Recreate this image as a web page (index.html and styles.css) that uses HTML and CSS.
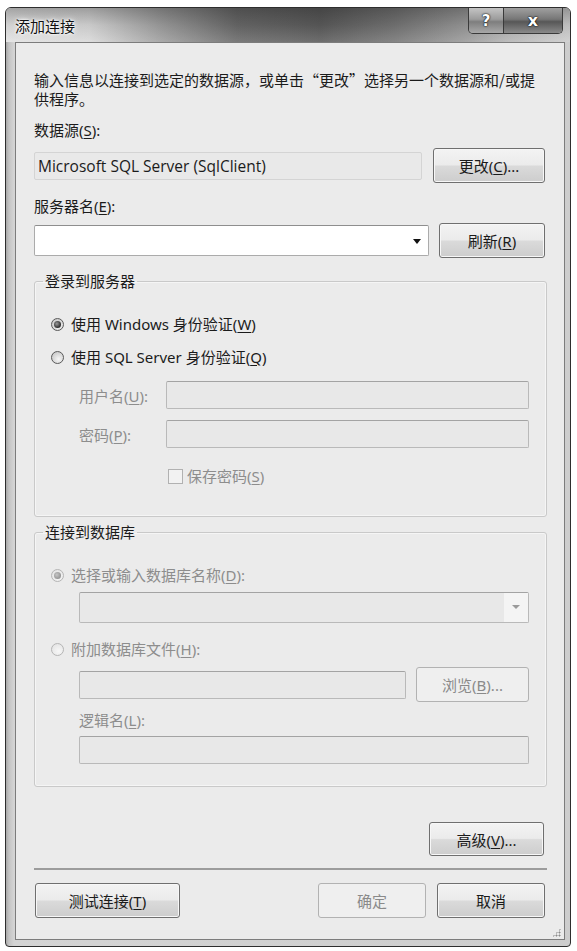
FILE: index.html
```html
<!DOCTYPE html>
<html lang="zh-CN">
  <head>
    <meta charset="UTF-8" />
    <meta name="viewport" content="width=device-width, initial-scale=1" />
    <title>添加连接</title>
    <link rel="stylesheet" href="styles.css">
  </head>
  <body>
    <div class="window">
      <div class="head">
        <span class="head-text">添加连接</span>
        <span class="head-right">
          <span class="caption-btns">
            <span class="cap help">?</span>
            <span class="cap close">x</span>
          </span>
        </span>
      </div>

      <div class="client">
        <p class="intro">输入信息以连接到选定的数据源，或单击“更改”选择另一个数据源和/或提<br>供程序。</p>

        <div class="label first">数据源(<u>S</u>):</div>
        <div class="row row-source">
          <div class="field readonly">Microsoft SQL Server (SqlClient)</div>
          <button class="btn btn-change">更改(<u>C</u>)...</button>
        </div>

        <div class="label second">服务器名(<u>E</u>):</div>
        <div class="row row-server">
          <div class="field combo"><span class="arrow"></span></div>
          <button class="btn btn-refresh">刷新(<u>R</u>)</button>
        </div>

        <!-- login group -->
        <fieldset class="group group-login">
          <legend>登录到服务器</legend>
          <label class="option">
            <span class="radio checked"></span>使用 Windows 身份验证(<u>W</u>)
          </label>
          <label class="option sql">
            <span class="radio"></span>使用 SQL Server 身份验证(<u>Q</u>)
          </label>
          <div class="cred-row user">
            <span class="cred-label">用户名(<u>U</u>):</span>
            <div class="field disabled"></div>
          </div>
          <div class="cred-row pass">
            <span class="cred-label">密码(<u>P</u>):</span>
            <div class="field disabled"></div>
          </div>
          <label class="option save">
            <span class="check"></span>保存密码(<u>S</u>)
          </label>
        </fieldset>

        <!-- database group -->
        <fieldset class="group group-db">
          <legend>连接到数据库</legend>
          <label class="option off">
            <span class="radio checked off"></span>选择或输入数据库名称(<u>D</u>):
          </label>
          <div class="field combo disabled db-combo"><span class="drop"><span class="arrow"></span></span></div>
          <label class="option off attach">
            <span class="radio off"></span>附加数据库文件(<u>H</u>):
          </label>
          <div class="row row-file">
            <div class="field disabled"></div>
            <button class="btn btn-browse" disabled>浏览(<u>B</u>)...</button>
          </div>
          <div class="sub-label">逻辑名(<u>L</u>):</div>
          <div class="field disabled logical"></div>
        </fieldset>

        <div class="advanced-row">
          <button class="btn btn-advanced">高级(<u>V</u>)...</button>
        </div>

        <hr class="separator">

        <div class="footer">
          <button class="btn btn-test">测试连接(<u>T</u>)</button>
          <button class="btn btn-ok" disabled>确定</button>
          <button class="btn btn-cancel">取消</button>
        </div>

        <span class="grip"></span>
      </div>
    </div>
  </body>
</html>
```

FILE: styles.css
```css
html,
body {
  margin: 0;
  padding: 0;
  background: #fff;
  font-family: "Noto Sans", "Noto Sans CJK SC", sans-serif;
  font-size: 15px;
  color: #1b1b1b;
}

.window {
  margin: 7px 5px 0 5px;
  width: 566px;
  height: 940px;
  border: 1px solid #2e2e2e;
  border-radius: 6px 6px 4px 4px;
  background: linear-gradient(90deg, #a9a9a9 0, #c4c4c4 3px, #d4d4d4 8px, #cdcdcd 100%);
  padding: 0 5px 9px 9px;
  box-sizing: border-box;
}

/* caption: the two halves carry the glass gradient */
.head {
  height: 34px;
  margin: 0 -5px 0 -9px;
  display: flex;
  border-radius: 5px 5px 0 0;
  overflow: hidden;
}

.head-text {
  flex: 1;
  padding: 8px 0 0 9px;
  font-family: "Noto Sans CJK SC", sans-serif;
  line-height: 19px;
  color: #111;
  text-shadow: 0 0 6px #fff, 0 0 3px #fff, 0 0 2px #fff;
  background:
    linear-gradient(180deg, rgba(20, 20, 20, 0.3) 0, rgba(20, 20, 20, 0.08) 50%, rgba(255, 255, 255, 0.12) 100%),
    linear-gradient(90deg, #e2e2e2 0, #d8d8d8 18%, #9c9c9c 34%, #686868 50%, #5a5a5a 68%, #747474 84%, #9a9a9a 100%);
}

.head-right {
  display: flex;
  padding-right: 7px;
  background:
    linear-gradient(180deg, rgba(20, 20, 20, 0.3) 0, rgba(20, 20, 20, 0.08) 50%, rgba(255, 255, 255, 0.12) 100%),
    linear-gradient(90deg, #9a9a9a 0, #b4b4b4 40%, #cccccc 100%);
}

.caption-btns {
  display: flex;
  height: 25px;
  border: 1px solid #3a3a3a;
  border-top: 0;
  border-radius: 0 0 5px 5px;
  overflow: hidden;
}

.cap {
  display: flex;
  align-items: center;
  justify-content: center;
  color: #fff;
  font-family: "DejaVu Sans", sans-serif;
  font-weight: bold;
  text-shadow: 0 0 2px #000, 0 0 1px #000;
  font-size: 15px;
}

.help {
  width: 34px;
  border-right: 1px solid #3a3a3a;
  background: linear-gradient(180deg, #c4c4c4 0, #9c9c9c 45%, #7e7e7e 55%, #a8a8a8 100%);
}

.close {
  width: 58px;
  font-size: 16px;
  background: linear-gradient(180deg, #a0a0a0 0, #767676 45%, #575757 55%, #8a8a8a 100%);
}

/* client area */
.client {
  position: relative;
  height: 898px;
  border: 1px solid #7c7c7c;
  background: #ebebeb;
  padding: 27px 17px 0 18px;
  box-sizing: border-box;
}

.intro {
  margin: 0;
  line-height: 19px;
  font-family: "Noto Sans CJK SC", sans-serif;
}

.label,
.sub-label {
  line-height: 19px;
}

.label.first {
  margin-top: 13px;
}

.label.second {
  margin-top: 14px;
}

u {
  text-decoration: underline;
  text-underline-offset: 2px;
}

.row {
  display: flex;
  align-items: center;
  margin-right: 2px;
}

.row-source {
  margin-top: 8px;
  gap: 11px;
}

.row-server {
  margin-top: 7px;
  gap: 10px;
}

.field {
  height: 28px;
  box-sizing: border-box;
  border: 1px solid #ababab;
  border-top-color: #8e8e8e;
  border-radius: 2px;
  background: #fff;
  flex: 1;
  position: relative;
}

.field.readonly {
  border-color: #d4d4d4;
  background: #e9e9e9;
  line-height: 26px;
  padding-left: 3px;
  font-family: "Open Sans", "Noto Sans CJK SC", sans-serif;
  font-size: 15.5px;
}

.field.combo {
  height: 31px;
}

.arrow {
  position: absolute;
  right: 7px;
  top: 13px;
  border-left: 4px solid transparent;
  border-right: 4px solid transparent;
  border-top: 5px solid #111;
}

.field.disabled {
  background: #e8e8e8;
  border-color: #b9b9b9;
  border-top-color: #a3a3a3;
}

/* buttons */
.btn {
  font: inherit;
  color: #1b1b1b;
  height: 35px;
  border: 1px solid #6f6f6f;
  border-radius: 3px;
  padding: 0;
  background: linear-gradient(180deg, #f3f3f3 0, #ebebeb 48%, #dadada 52%, #cdcdcd 100%);
  box-shadow: inset 0 0 0 1px #f7f7f7;
}

.btn:disabled {
  color: #8a8a8a;
  border-color: #b2b2b2;
  background: #efefef;
  box-shadow: none;
}

.btn-change {
  width: 112px;
}

.btn-refresh {
  width: 106px;
}

/* group boxes */
.group {
  margin: 0;
  border: 1px solid #c9c9c9;
  border-radius: 3px;
  box-shadow: inset 0 0 0 1px #f5f5f5;
  min-width: 0;
}

.group legend {
  margin-left: -8px;
  padding: 0 2px;
  line-height: 19px;
}

.group-login {
  margin-top: 14px;
  padding: 24px 17px 30px 16px;
}

.group-db {
  margin-top: 6px;
  padding: 24px 17px 22px 16px;
}

.option {
  display: flex;
  align-items: center;
  line-height: 19px;
}

.option.sql {
  margin-top: 14px;
}

.option.off {
  color: #8d8d8d;
}

.option.attach {
  margin-top: 17px;
}

.option.save {
  margin-top: 19px;
  margin-left: 117px;
  color: #8d8d8d;
}

.radio {
  width: 11px;
  height: 11px;
  border: 1px solid #5a5a5a;
  border-radius: 50%;
  margin-right: 7px;
  background: radial-gradient(circle at 60% 65%, #f6f6f6 0, #cfcfcf 70%, #bcbcbc 100%);
  position: relative;
  flex: none;
}

.radio.checked::after {
  content: "";
  position: absolute;
  left: 2px;
  top: 2px;
  width: 7px;
  height: 7px;
  border-radius: 50%;
  background: radial-gradient(circle at 40% 40%, #9a9a9a 0, #2a2a2a 70%);
}

.radio.off {
  border-color: #b5b5b5;
  background: radial-gradient(circle at 60% 65%, #f7f7f7 0, #e0e0e0 100%);
}

.radio.checked.off::after {
  background: radial-gradient(circle at 40% 40%, #c6c6c6 0, #8e8e8e 80%);
}

.check {
  width: 13px;
  height: 13px;
  border: 1px solid #b1b1b1;
  background: #f2f2f2;
  margin-right: 4px;
  flex: none;
}

.cred-row {
  display: flex;
  align-items: center;
  padding-left: 28px;
}

.cred-row.user {
  margin-top: 14px;
}

.cred-row.pass {
  margin-top: 11px;
}

.cred-label {
  width: 87px;
  color: #8d8d8d;
}

.db-combo {
  margin: 7px 0 0 28px;
}

.db-combo .drop {
  position: absolute;
  right: 0;
  top: 0;
  bottom: 0;
  width: 24px;
  background: #f4f4f4;
}

.db-combo .arrow {
  right: 8px;
  top: 12px;
  border-top: 4px solid #9a9a9a;
}

.row-file {
  margin: 8px 0 0 28px;
  gap: 10px;
}

.btn-browse {
  width: 113px;
}

.sub-label {
  margin: 9px 0 0 28px;
  color: #8d8d8d;
}

.field.logical {
  margin: 6px 0 0 28px;
}

.advanced-row {
  display: flex;
  justify-content: flex-end;
  margin-top: 35px;
  margin-right: 3px;
}

.btn-advanced {
  width: 115px;
  height: 34px;
}

.separator {
  margin: 12px 0 0;
  border: 0;
  border-top: 2px solid #9c9c9c;
}

.footer {
  display: flex;
  margin-top: 13px;
  gap: 11px;
  margin-right: 2px;
}

.btn-test {
  width: 145px;
  margin-left: 1px;
}

.btn-ok {
  width: 108px;
  margin-left: auto;
}

.btn-cancel {
  width: 108px;
}

.grip {
  position: absolute;
  right: 3px;
  bottom: 2px;
  width: 9px;
  height: 9px;
  background:
    radial-gradient(circle, #8a8a8a 0.8px, transparent 1.2px) 0 0 / 3px 3px;
  clip-path: polygon(100% 0, 100% 100%, 0 100%);
}
```
